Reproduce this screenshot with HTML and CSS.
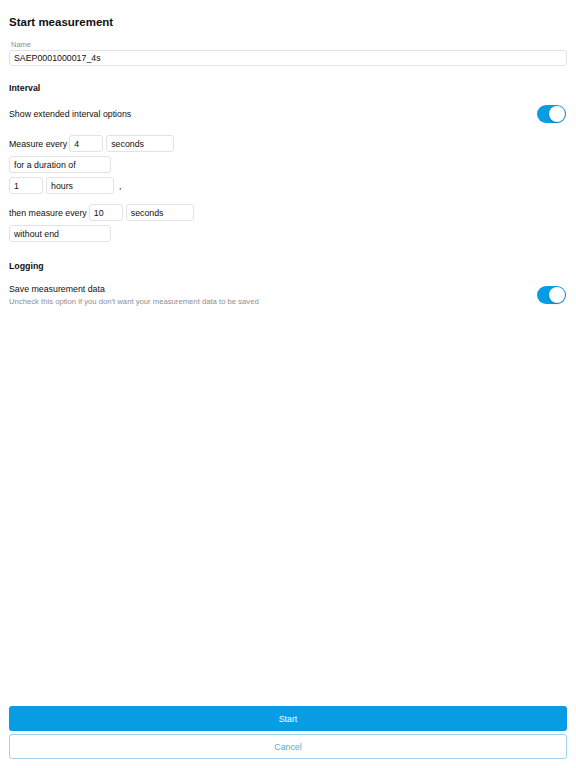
FILE: index.html
```html
<!DOCTYPE html>
<html lang="en">
<head>
    <meta charset="UTF-8">
    <meta name="viewport" content="width=device-width, initial-scale=1.0">
    <title>Start measurement</title>
    <link rel="stylesheet" href="styles.css">
</head>
<body>
    <div class="page">
        <h1 class="title">Start measurement</h1>

        <div class="field">
            <label class="field-label" for="name">Name</label>
            <input type="text" id="name" class="box wide" value="SAEP0001000017_4s">
        </div>

        <h2 class="section-title">Interval</h2>
        <div class="switch-row">
            <span>Show extended interval options</span>
            <label class="switch">
                <input type="checkbox" checked>
                <span class="slider"></span>
            </label>
        </div>

        <div class="interval">
            <div class="line">
                <span>Measure every</span>
                <input type="text" class="box num" value="4">
                <input type="text" class="box unit" value="seconds">
            </div>
            <div class="line">
                <input type="text" class="box long" value="for a duration of">
            </div>
            <div class="line">
                <input type="text" class="box num" value="1">
                <input type="text" class="box unit" value="hours">
                <span class="comma">,</span>
            </div>
            <div class="line spaced">
                <span>then measure every</span>
                <input type="text" class="box num" value="10">
                <input type="text" class="box unit" value="seconds">
            </div>
            <div class="line">
                <input type="text" class="box long" value="without end">
            </div>
        </div>

        <h2 class="section-title logging">Logging</h2>
        <div class="switch-row save-row">
            <div>
                <div>Save measurement data</div>
                <div class="hint">Uncheck this option if you don't want your measurement data to be saved</div>
            </div>
            <label class="switch">
                <input type="checkbox" checked>
                <span class="slider"></span>
            </label>
        </div>

        <div class="actions">
            <button class="button start">Start</button>
            <button class="button cancel">Cancel</button>
        </div>
    </div>
</body>
</html>
```

FILE: styles.css
```css
body {
    font-family: "Liberation Sans", Arial, sans-serif;
    margin: 0;
    background-color: white;
    color: #111;
    font-size: 8.8px;
}
.page {
    display: flex;
    flex-direction: column;
    height: 768px;
    box-sizing: border-box;
    padding: 15px 9px 9px;
}
.title {
    font-size: 11.5px;
    line-height: 14px;
    margin: 0 0 11px;
}
.field-label {
    display: block;
    font-size: 7.5px;
    line-height: 9px;
    color: #8e8e93;
    margin-left: 2px;
    margin-bottom: 1px;
}
.box {
    font-family: inherit;
    font-size: 8.8px;
    color: #111;
    height: 17px;
    padding: 0 4px;
    border: 1px solid #e3e3e6;
    border-radius: 3px;
    box-sizing: border-box;
    background: white;
    outline: none;
}
.wide {
    width: 100%;
    height: 16px;
    display: block;
}
.section-title {
    font-size: 8.8px;
    line-height: 11px;
    margin: 17px 0 0;
}
.switch-row {
    display: flex;
    align-items: center;
    justify-content: space-between;
    margin-top: 11px;
    padding-right: 1px;
}
.switch {
    position: relative;
    display: inline-block;
    width: 29px;
    height: 18px;
}
.switch input {
    display: none;
}
.slider {
    position: absolute;
    inset: 0;
    background-color: #079ce3;
    border-radius: 9px;
}
.slider:before {
    content: "";
    position: absolute;
    width: 16px;
    height: 16px;
    top: 1px;
    right: 1px;
    background: white;
    border-radius: 50%;
    box-shadow: 0 1px 2px rgba(0,0,0,0.25);
}
.interval {
    display: flex;
    flex-direction: column;
    gap: 4px;
    margin-top: 12px;
}
.line {
    display: flex;
    align-items: center;
    gap: 3px;
}
.line span {
    margin-right: -1px;
}
.spaced {
    margin-top: 6px;
}
.num {
    width: 34px;
}
.unit {
    width: 68px;
}
.long {
    width: 102px;
}
.line .comma {
    margin-left: 2px;
}
.logging {
    margin-top: 19px;
}
.save-row {
    margin-top: 12px;
    align-items: center;
}
.hint {
    font-size: 7.7px;
    color: #8e8e93;
    margin-top: 3px;
}
.actions {
    margin-top: auto;
    display: flex;
    flex-direction: column;
    gap: 3px;
}
.button {
    font-family: inherit;
    font-size: 8.8px;
    height: 25px;
    border-radius: 3px;
    cursor: pointer;
}
.start {
    background-color: #079ce3;
    color: white;
    border: none;
}
.cancel {
    background-color: white;
    color: #4aaee3;
    border: 1px solid #9dd4f1;
}
```
